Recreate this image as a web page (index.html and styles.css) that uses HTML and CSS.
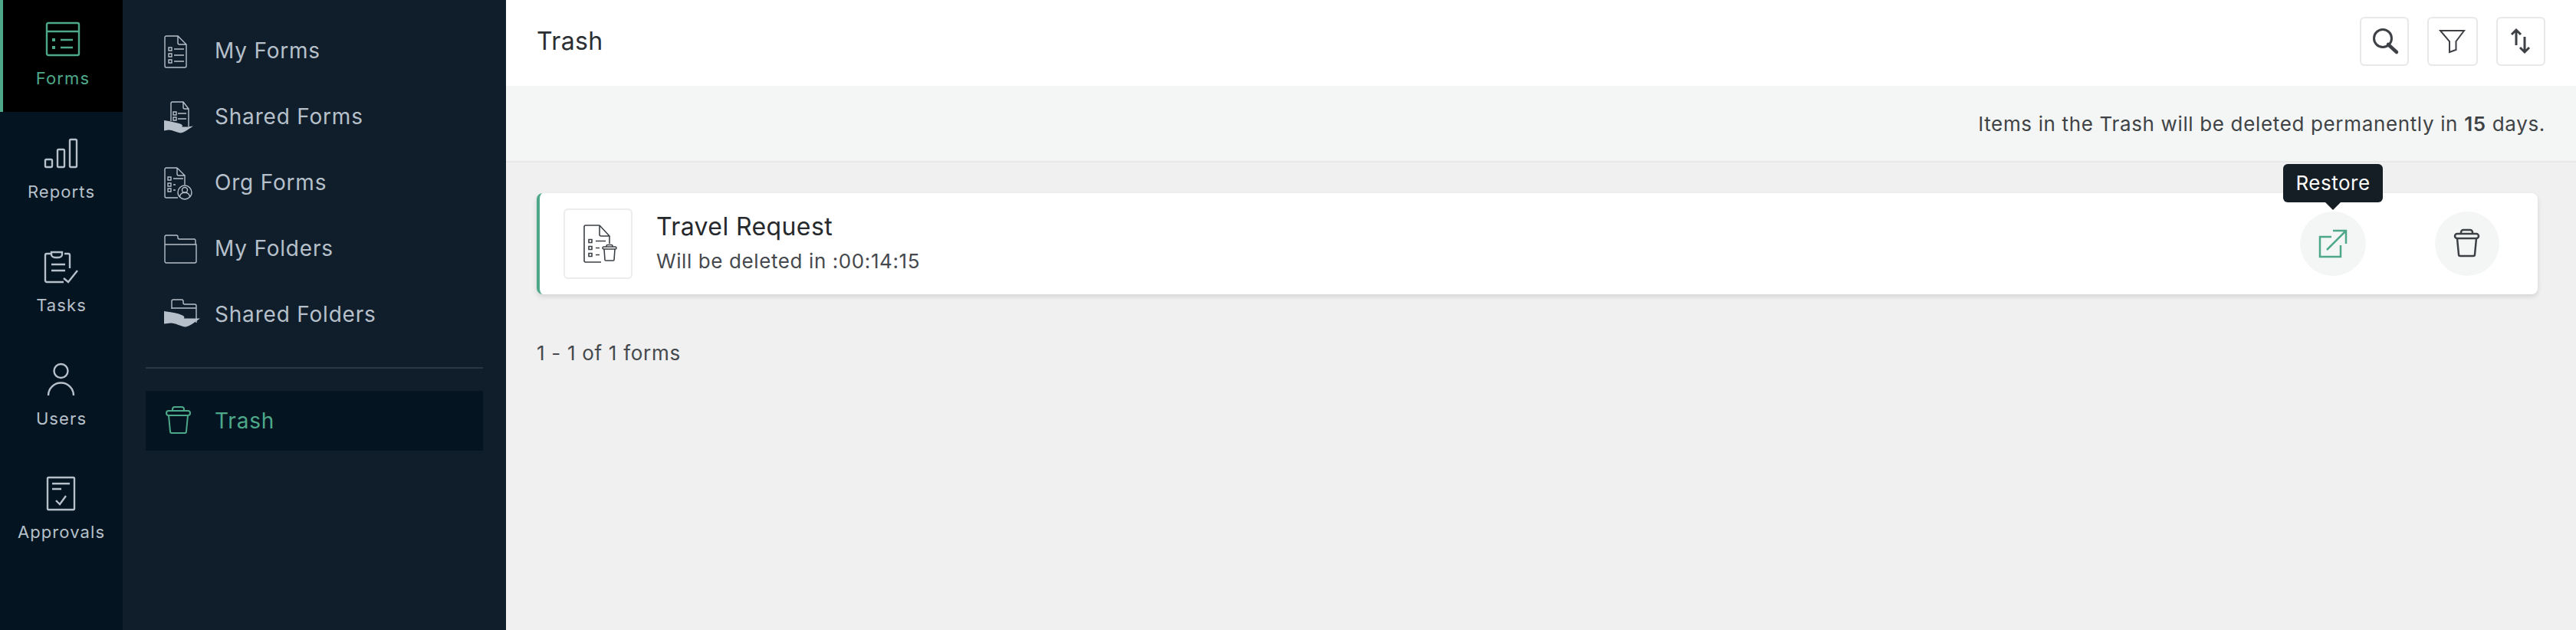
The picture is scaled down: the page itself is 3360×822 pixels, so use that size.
FILE: index.html
```html
<!DOCTYPE html>
<html lang="en">
<head>
  <meta charset="UTF-8" />
  <title>Trash | Forms</title>
  <link rel="stylesheet" href="styles.css">
</head>
<body>
  <div class="app">
    <!-- Main rail -->
    <nav class="rail">
      <a class="rail-item active">
        <svg viewBox="0 0 48 48" class="rail-icon"><rect x="3" y="3" width="42" height="42" rx="2"/><path d="M3 14h42M21 25h16M21 35h16"/><path class="dot" d="M10 23h4v4h-4zM10 33h4v4h-4z"/></svg>
        <span>Forms</span>
      </a>
      <a class="rail-item">
        <svg viewBox="0 0 48 48" class="rail-icon"><rect x="3" y="32" width="9" height="10" rx="1.5"/><rect x="19" y="19" width="9" height="23" rx="1.5"/><rect x="35" y="6" width="9" height="36" rx="1.5"/></svg>
        <span>Reports</span>
      </a>
      <a class="rail-item">
        <svg viewBox="0 0 48 48" class="rail-icon"><path d="M27 44H5a2 2 0 0 1-2-2V9a2 2 0 0 1 2-2h5M28 7h5a2 2 0 0 1 2 2v17"/><path d="M11 5h14v3a5 4 0 0 1-5 4h-4a5 4 0 0 1-5-4zM11 21h18M11 29h18M27 39l6 5 12-15"/></svg>
        <span>Tasks</span>
      </a>
      <a class="rail-item">
        <svg viewBox="0 0 48 48" class="rail-icon"><circle cx="23.5" cy="12" r="9"/><path d="M7 44a16.500 16.500 0 0 1 33 0"/></svg>
        <span>Users</span>
      </a>
      <a class="rail-item">
        <svg viewBox="0 0 48 48" class="rail-icon"><rect x="6" y="3" width="35" height="42" rx="1.500"/><path d="M12 11h23M12 18h12M17 33l5 5 8-11"/></svg>
        <span>Approvals</span>
      </a>
    </nav>

    <!-- Sub menu -->
    <aside class="sidebar">
      <ul class="side-list">
        <li class="side-item">
          <svg viewBox="0 0 48 48" class="side-icon"><path d="M18 5H3a2 2 0 0 0-2 2v37a2 2 0 0 0 2 2h24a2 2 0 0 0 2-2V16zM18 5v9a2 2 0 0 0 2 2h9"/><path d="M6 20h4v4H6zM6 28h4v4H6zM6 36h4v4H6zM13 22h13M13 30h13M13 38h13"/></svg>
          <span>My Forms</span>
        </li>
        <li class="side-item">
          <svg viewBox="0 0 48 48" class="side-icon"><path d="M9 30V7a2 2 0 0 1 2-2h14l7 9v23M25 5v7a2 2 0 0 0 2 2h5"/><path d="M12 18h4v4h-4zM12 25h4v4h-4zM18 20h11M18 27h11"/><path class="fill" d="M0 29l3 .5c6 1 12 2 18 4 3 1 4 3 2 4 5 0 10 0 15-1l-9 6c-3 2-6 3-8 3-5-1-10-4-15-4l-6 1z"/></svg>
          <span>Shared Forms</span>
        </li>
        <li class="side-item">
          <svg viewBox="0 0 48 48" class="side-icon"><path d="M17 5H3a2 2 0 0 0-2 2v35a2 2 0 0 0 2 2h15M17 5v8a2 2 0 0 0 2 2h8v12M17 5l10 10"/><path d="M5 17h4v4H5zM5 25h4v4H5zM5 32h4v4H5zM12 19h13M12 27h3M12 34h3"/><circle cx="27" cy="37" r="9"/><circle cx="27" cy="34" r="3.500"/><path d="M20.500 43a6.500 6 0 0 1 13 0"/></svg>
          <span>Org Forms</span>
        </li>
        <li class="side-item">
          <svg viewBox="0 0 48 48" class="side-icon"><path d="M1 19V9a2 2 0 0 1 2-2h13a2 2 0 0 1 2 2v1a2 2 0 0 0 2 2h20a2 2 0 0 1 1 2v5M1 19h41v22a2 2 0 0 1-2 2H3a2 2 0 0 1-2-2z"/></svg>
          <span>My Folders</span>
        </li>
        <li class="side-item">
          <svg viewBox="0 0 48 48" class="side-icon"><path d="M10 17V7a2 2 0 0 1 2-2h11a2 2 0 0 1 2 2v2a2 2 0 0 0 2 2h13a2 2 0 0 1 2 2v22M10 16h32"/><path class="fill" d="M0 20l3 .5c7 1 15 2 21 5 3 1 3 4 1 4 7 0 14 0 22 0l-10 7c-3 2-7 4-10 4-6-1-12-5-18-5l-9 1z"/></svg>
          <span>Shared Folders</span>
        </li>
      </ul>
      <div class="side-divider"></div>
      <div class="side-item trash-item">
        <svg viewBox="0 0 48 48" class="side-icon"><rect x="3" y="11" width="31" height="6" rx="3"/><path d="M11 11V9a3 3 0 0 1 3-3h9a3 3 0 0 1 3 3v2M6 17l2 21a2 2 0 0 0 2 2h17a2 2 0 0 0 2-2l2-21"/></svg>
        <span>Trash</span>
      </div>
    </aside>

    <main class="main">
      <header class="topbar">
        <h1>Trash</h1>
        <div class="top-actions">
          <button class="tool-btn">
            <svg viewBox="0 0 40 40" class="tool-icon"><circle cx="18" cy="16" r="11.500" class="thick"/><path d="M25 24l11 10" class="thicker"/></svg>
          </button>
          <button class="tool-btn wide">
            <svg viewBox="0 0 40 40" class="tool-icon"><path d="M4 6h31L24.500 20v11L16 34V20z"/></svg>
          </button>
          <button class="tool-btn">
            <svg viewBox="0 0 40 40" class="tool-icon"><path class="thick" d="M14 5v20M8 11l6-6 6 6M25 14v20M19 28l6 6 6-6"/></svg>
          </button>
        </div>
      </header>

      <div class="notice">Items in the Trash will be deleted permanently in <strong>15</strong> days.</div>

      <section class="content">
        <div class="form-card">
          <div class="form-thumb">
            <svg viewBox="0 0 52 52" class="thumb-icon"><path d="M28 2H10a2 2 0 0 0-2 2v44a2 2 0 0 0 2 2h20M28 2l13 14v10M28 2v12a2 2 0 0 0 2 2h11"/><path d="M14 20.500h4v4h-4zM14 29.500h4v4h-4zM14 38.500h4v4h-4zM23 22.500h13M23 31.500h5M23 40.500h5"/><rect x="32" y="30" width="18" height="3" rx="1.500"/><path d="M37 30v-1a1.500 1.500 0 0 1 1.500-1.500h5a1.500 1.500 0 0 1 1.500 1.500v1M34 33l1 14a1 1 0 0 0 1 1h10a1 1 0 0 0 1-1l1-14"/></svg>
          </div>
          <div class="form-info">
            <h2>Travel Request</h2>
            <p>Will be deleted in :00:14:15</p>
          </div>
          <div class="form-actions">
            <button class="round-btn restore">
              <svg viewBox="0 0 48 48" class="round-icon green"><path d="M22 15H7v26h27V26M16 32L41 7M24 7h17v17"/></svg>
              <span class="tooltip">Restore</span>
            </button>
            <button class="round-btn">
              <svg viewBox="0 0 48 48" class="round-icon"><rect x="8" y="11" width="31" height="6" rx="3"/><path d="M16 11V9a3 3 0 0 1 3-3h9a3 3 0 0 1 3 3v2M11 17l2 21a2 2 0 0 0 2 2h17a2 2 0 0 0 2-2l2-21"/></svg>
            </button>
          </div>
        </div>
        <p class="pager">1 - 1 of 1 forms</p>
      </section>
    </main>
  </div>
</body>
</html>
```

FILE: styles.css
```css
* {
  box-sizing: border-box;
  margin: 0;
  padding: 0;
}

body {
  font-family: "Inter", "Liberation Sans", sans-serif;
  background-color: #f0f0f0;
  overflow: hidden;
}

svg {
  display: block;
  fill: none;
  flex-shrink: 0;
}

.app {
  display: flex;
  height: 822px;
}

/* Main rail */
.rail {
  width: 160px;
  background: #041420;
  color: #b6c0ca;
}

.rail-item {
  display: flex;
  flex-direction: column;
  align-items: center;
  height: 148px;
  padding-top: 28px;
  font-size: 22px;
  line-height: 26px;
  letter-spacing: 1.1px;
}

.rail-item.active {
  height: 146px;
  margin-bottom: 2px;
  padding-top: 27px;
  background: #000;
  border-left: 4px solid #4da88a;
  color: #4da88a;
}

.rail-icon {
  width: 48px;
  height: 48px;
  margin-bottom: 14px;
  stroke: currentColor;
  stroke-width: 2.4;
}

.rail-item:not(.active) .rail-icon {
  margin-bottom: 13px;
}

.rail-icon .dot {
  fill: currentColor;
  stroke: none;
}

/* Sub menu */
.sidebar {
  width: 500px;
  padding: 23px 30px 0;
  background: #101d2a;
  color: #b6c0ca;
}

.side-list {
  list-style: none;
}

.side-item {
  display: flex;
  align-items: center;
  gap: 18px;
  height: 86px;
  padding-left: 24px;
  font-size: 28px;
  letter-spacing: 0.8px;
}

.side-icon {
  width: 48px;
  height: 48px;
  stroke: currentColor;
  stroke-width: 1.4;
}

.side-icon .fill {
  fill: currentColor;
  stroke: none;
}

.side-divider {
  height: 2px;
  margin: 26px 0 29px;
  background: #2a3744;
}

.trash-item {
  height: 78px;
  background: #041420;
  color: #4da88a;
}

.trash-item .side-icon {
  stroke-width: 2;
}

/* Content */
.main {
  flex: 1;
  display: flex;
  flex-direction: column;
}

.topbar {
  display: flex;
  align-items: center;
  justify-content: space-between;
  height: 112px;
  padding: 0 40px 5px;
  background: #fff;
}

.topbar h1 {
  font-size: 32px;
  font-weight: 400;
  letter-spacing: 0.4px;
  color: #2b2f33;
}

.top-actions {
  display: flex;
  gap: 24px;
}

.tool-btn {
  display: flex;
  align-items: center;
  justify-content: center;
  width: 64px;
  height: 64px;
  background: #fff;
  border: 2px solid #e8e8e8;
  border-radius: 6px;
}

.tool-btn.wide {
  width: 66px;
}

.tool-icon {
  width: 40px;
  height: 40px;
  stroke: #3d4146;
  stroke-width: 2;
}

.tool-icon .thick {
  stroke-width: 3;
}

.tool-icon .thicker {
  stroke-width: 4.5;
  stroke-linecap: round;
}

.notice {
  height: 100px;
  padding-right: 40px;
  display: flex;
  align-items: center;
  justify-content: flex-end;
  gap: 8px;
  background: #f4f6f5;
  border-bottom: 2px solid #e8e8e8;
  font-size: 26px;
  letter-spacing: 0.65px;
  color: #3f4346;
}

.notice strong {
  font-weight: 600;
}

.content {
  padding: 40px 50px 0 40px;
}

.form-card {
  display: flex;
  align-items: center;
  height: 132px;
  padding: 0 50px 0 31px;
  background: #fff;
  border-left: 4px solid #4da88a;
  border-radius: 8px;
  box-shadow: 0 3px 6px rgba(0, 0, 0, 0.12);
}

.form-thumb {
  display: flex;
  align-items: center;
  justify-content: center;
  width: 90px;
  height: 92px;
  margin-right: 32px;
  border: 2px solid #ececec;
  border-radius: 6px;
}

.thumb-icon {
  width: 52px;
  height: 52px;
  stroke: #3d4146;
  stroke-width: 1.6;
}

.form-info {
  flex: 1;
  margin-left: -1px;
}

.form-info h2 {
  margin-bottom: 5px;
  font-size: 32px;
  line-height: 40px;
  font-weight: 400;
  letter-spacing: 0.4px;
  color: #26292c;
}

.form-info p {
  font-size: 26px;
  line-height: 40px;
  letter-spacing: 0.6px;
  color: #45494d;
}

.form-actions {
  display: flex;
  gap: 90px;
}

.round-btn {
  position: relative;
  display: flex;
  align-items: center;
  justify-content: center;
  width: 84px;
  height: 84px;
  background: #f4f6f5;
  border: none;
  border-radius: 50%;
}

.round-btn.restore {
  width: 86px;
}

.round-icon {
  width: 48px;
  height: 48px;
  stroke: #3d4146;
  stroke-width: 2.5;
}

.round-icon.green {
  stroke: #4da88a;
}

/* sits over the card, above the restore button */
.tooltip {
  position: absolute;
  left: 50%;
  top: -62px;
  transform: translateX(-50%);
  width: 130px;
  height: 50px;
  line-height: 50px;
  background: #151d25;
  border-radius: 6px;
  color: #fff;
  font-family: "Inter", "Liberation Sans", sans-serif;
  font-size: 26px;
  letter-spacing: 0.5px;
  text-align: center;
}

.tooltip::after {
  content: "";
  position: absolute;
  left: 50%;
  top: 100%;
  margin-left: -10px;
  border-style: solid;
  border-width: 10px 10px 0;
  border-color: #151d25 transparent transparent;
}

.pager {
  margin-top: 62px;
  font-size: 26px;
  line-height: 30px;
  letter-spacing: 0.7px;
  color: #45494d;
}
```
